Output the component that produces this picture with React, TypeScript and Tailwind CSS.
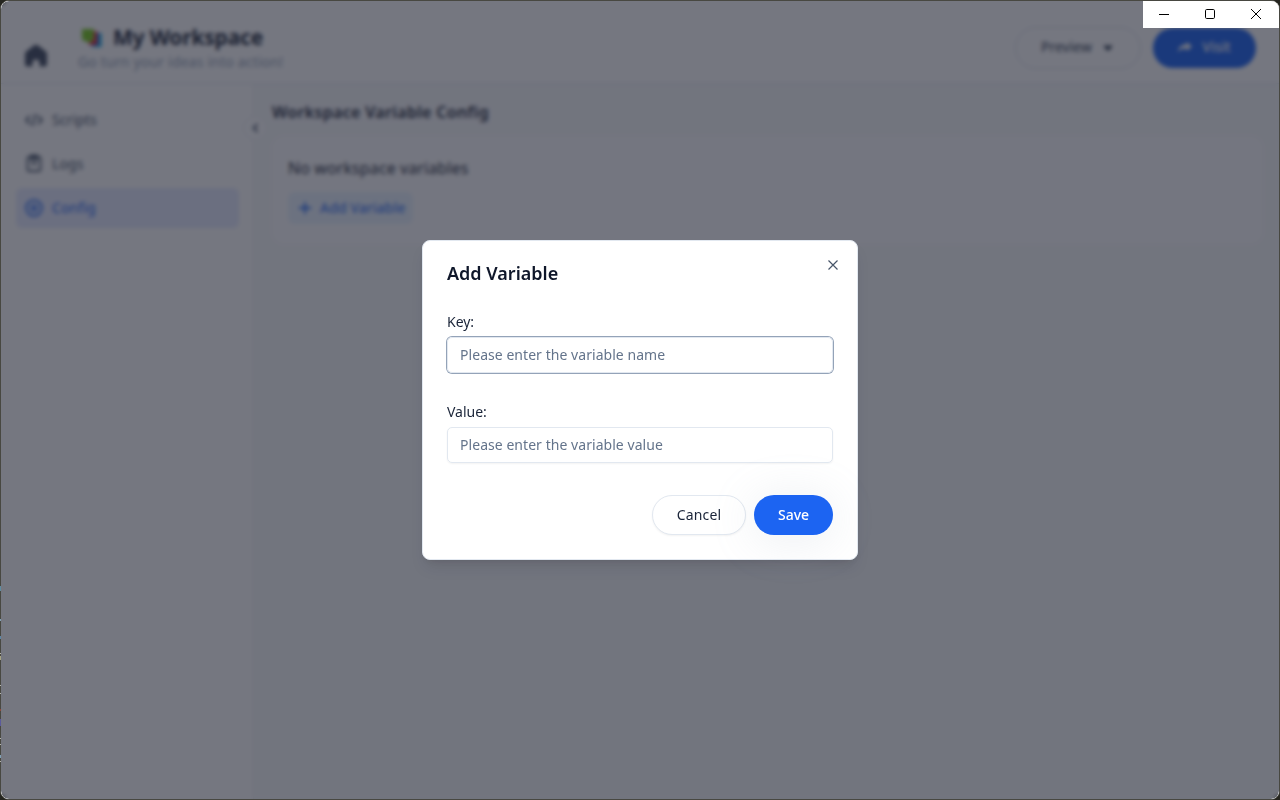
const edgeMarks = [
  { top: 586, height: 5, color: "#5f8ca0" },
  { top: 619, height: 2, color: "#83a2b5" },
  { top: 636, height: 3, color: "#5c86a4" },
  { top: 653, height: 1, color: "#b5b5ac" },
  { top: 656, height: 4, color: "#a7a583" },
  { top: 685, height: 1, color: "#b5b5ac" },
  { top: 693, height: 1, color: "#b5b5ac" },
  { top: 709, height: 2, color: "#8c4a3c" },
  { top: 719, height: 7, color: "#5b5a9c" },
  { top: 738, height: 1, color: "#b5b5ac" },
  { top: 744, height: 1, color: "#b5b5ac" },
  { top: 755, height: 3, color: "#7fa0b5" },
  { top: 761, height: 1, color: "#b5b5ac" },
];

function WindowControls() {
  return (
    <div className="flex h-[27px] w-[136px] items-center bg-white text-black">
      <div className="flex h-full w-[42px] items-start justify-center pt-2">
        <svg width="10" height="10" viewBox="0 0 10 10" shapeRendering="crispEdges"><path d="M0 5.5h10" stroke="currentColor" /></svg>
      </div>
      <div className="flex h-full w-[50px] items-start justify-center pt-2">
        <svg width="10" height="10" viewBox="0 0 10 10" fill="none"><rect x=".5" y=".5" width="9" height="9" rx="1.2" stroke="currentColor" /></svg>
      </div>
      <div className="flex h-full w-[42px] items-start justify-center pt-2">
        <svg width="10" height="10" viewBox="0 0 10 10"><path d="M0 0l10 10M10 0L0 10" stroke="currentColor" /></svg>
      </div>
    </div>
  );
}

function Header() {
  return (
    <header className="flex h-[83px] shrink-0 items-center border-b border-[#e2e8f0] bg-white pr-[23px] pl-[23px]">
      <svg className="mt-[27px] self-start" width="24" height="41" viewBox="0 0 24 41" fill="#3f4a5f">
        <path d="M10.200 17.300 2.200 23.500A3 3 0 0 0 1 26v10a2.500 2.500 0 0 0 2.500 2.500h5V35a3.500 3.500 0 0 1 7 0v3.500h5A2.500 2.500 0 0 0 23 36V26a3 3 0 0 0-1.200-2.500l-8-6.200a3 3 0 0 0-3.600 0z" />
      </svg>
      <div className="ml-[30px] mt-[11px] flex h-[50px] flex-col">
        <div className="flex h-[30px] items-center">
          <svg className="mr-[9px] ml-1" width="22" height="20" viewBox="0 0 22 20">
            <path d="M9 5h10.500v14H10z" fill="#0ea5e9" />
            <path d="M6 3.500h9.500v13.500H7z" fill="#e11d48" />
            <path d="M0 1h12v10c-1 3-3 4-6 3-3-.5-5-1-6-3z" fill="#77c81e" />
          </svg>
          <h1 className="whitespace-nowrap text-[21px] font-bold tracking-[-0.2px] text-[#1e293b]">My Workspace</h1>
        </div>
        <p className="mt-[1px] whitespace-nowrap text-[14px] leading-4 tracking-[0.18px] text-[#94a3b8]">Go turn your ideas into action!</p>
      </div>
      <div className="ml-auto flex items-center gap-3 pt-[11px]">
        <div className="flex h-[42px] w-[126px] items-center justify-center gap-[11px] rounded-full border border-[#d8dfe9] pr-[2px] pb-[2px] text-[14px] text-[#334155]">
          Preview
          <svg className="mt-[2px]" width="10" height="8" viewBox="0 0 10 8" fill="currentColor"><path d="M1 1.500h8a.6.600 0 0 1 .4 1L5.500 6.800a.7.700 0 0 1-1 0L.6 2.500a.6.600 0 0 1 .4-1z" /></svg>
        </div>
        <div className="flex h-10 w-[103px] items-center justify-center gap-[10px] rounded-full bg-[#1c64f2] pb-[2px] text-[14px] font-medium text-white">
          <svg width="14" height="12" viewBox="0 0 14 12" fill="currentColor"><path d="M8.500 1 14 5.500 8.500 10V7.500C5 7.200 2 8 0 11c.3-5 4-7.500 8.500-7.500z" /></svg>
          Visit
        </div>
      </div>
    </header>
  );
}

function Sidebar() {
  return (
    <aside className="relative flex w-[253px] shrink-0 flex-col gap-1 border-r border-[#f0f1f4] bg-white py-4 pr-[14px] pl-[15px] text-[14px] tracking-[0.1px] text-[#475569]">
      <div className="flex h-10 items-center gap-[9px] px-[9px] pb-[2px]">
        <svg className="mt-[2px]" width="18" height="16" viewBox="0 0 18 16" fill="none" stroke="currentColor" strokeWidth="1.8"><path d="m5 4-4 4 4 4m8-8 4 4-4 4M10.500 2l-3 12" /></svg>
        Scripts
      </div>
      <div className="flex h-10 items-center gap-[9px] px-[9px] pb-[2px]">
        <svg width="18" height="18" viewBox="0 0 18 18" fill="none" stroke="currentColor" strokeWidth="1.800"><rect x="2.500" y="3" width="13" height="14" rx="1.500" /><path d="M6 1.500h6v4H6zm0 8h6" /></svg>
        Logs
      </div>
      <div className="flex h-10 items-center gap-[9px] rounded-md bg-[#e6ebff] px-[9px] pb-[2px] text-[#1c64f2]">
        <svg className="mt-[2px]" width="18" height="18" viewBox="0 0 18 18" fill="none" stroke="currentColor" strokeWidth="1.800"><circle cx="9" cy="9" r="7.800" /><circle cx="9" cy="9" r="2.600" /></svg>
        Config
      </div>
      <div className="absolute top-8 -right-[14px] z-10 flex size-[24px] items-center justify-center rounded-full border border-[#edf0f4] bg-white text-[#475569]">
        <svg width="7" height="10" viewBox="0 0 7 10" fill="none" stroke="currentColor" strokeWidth="1.800"><path d="M5.500 1 1.500 5l4 4" /></svg>
      </div>
    </aside>
  );
}

function Field({ label, placeholder, focused = false }: { label: string; placeholder: string; focused?: boolean }) {
  return (
    <label className="flex flex-col">
      <span className="h-5 text-[14px] leading-5 tracking-[-0.02px] text-[#1a2438]">{label}</span>
      <input
        placeholder={placeholder}
        className={
          focused
            ? "mt-[5px] h-9 rounded-[5px] border border-[#e2e8f0] px-3 pb-[2px] text-[14px] tracking-[0.05px] shadow-[0_0_0_1px_#94a3b8] outline-none placeholder:text-[#64748b]"
            : "mt-[5px] h-9 rounded-[5px] border border-[#e2e8f0] px-3 pb-[2px] text-[14px] tracking-[0.05px] shadow-[0_1px_2px_rgba(0,0,0,0.05)] outline-none placeholder:text-[#64748b]"
        }
      />
    </label>
  );
}

function VariableDialog() {
  return (
    <section role="dialog" className="relative flex h-[320px] w-[436px] flex-col rounded-[8px] border border-[#e2e8f0] bg-white p-6 shadow-[0_10px_15px_-3px_rgba(0,0,0,0.1),0_4px_6px_-4px_rgba(0,0,0,0.1)]">
      <h2 className="mt-[-2px] h-5 text-[18px] font-semibold leading-5 tracking-[0px] text-[#0f172a]">Add Variable</h2>
      <svg className="absolute top-[19px] right-[19px] text-[#475569]" width="10" height="10" viewBox="0 0 10 10"><path d="m.5.500 9 9m0-9-9 9" stroke="currentColor" strokeWidth="1.200" /></svg>
      <div className="mt-[29px] flex flex-col gap-[29px]">
        <Field label="Key:" placeholder="Please enter the variable name" focused />
        <Field label="Value:" placeholder="Please enter the variable value" />
      </div>
      <div className="mt-8 flex justify-end gap-2 text-[14px]">
        <button className="h-10 w-[94px] rounded-full border border-[#e2e8f0] bg-white pb-[2px] tracking-[0.15px] text-[#1a2438] shadow-[0_1px_2px_rgba(0,0,0,0.05)]">Cancel</button>
        <button className="h-10 w-[79px] rounded-full bg-[#1c64f2] pb-[2px] font-medium text-white shadow-[0_4px_48px_rgba(148,163,184,0.2)]">Save</button>
      </div>
    </section>
  );
}

export default function App() {
  return (
    <div className="relative h-[800px] w-[1280px] overflow-hidden bg-[#25251f] font-['Noto_Sans',sans-serif]">
      <div className="relative flex h-full flex-col overflow-hidden rounded-[9px] border border-[#484841] bg-white">
        <Header />
        <div className="flex min-h-0 flex-1">
          <Sidebar />
          <main className="flex-1 bg-[#f8f9fb] pt-4 pr-4 pl-[18px]">
            <h2 className="h-6 text-[16px] font-semibold leading-6 tracking-[0.33px] text-[#1e293b]">Workspace Variable Config</h2>
            <div className="mt-3 h-[108px] rounded-xl bg-[#fdfdfe] p-4">
              <p className="h-6 pt-1 text-[16px] leading-6 tracking-[0.1px] text-[#1e293b]">No workspace variables</p>
              <div className="mt-4 flex h-8 w-[125px] items-center gap-[9px] rounded-md bg-[#e9f3ff] pb-px pl-[11px] text-[14px] tracking-[0.2px] text-[#1c64f2]">
                <svg width="12" height="12" viewBox="0 0 12 12" stroke="currentColor" strokeWidth="1.800"><path d="M0 6h12M6 0v12" /></svg>
                <span className="whitespace-nowrap">Add Variable</span>
              </div>
            </div>
          </main>
        </div>
        <div className="absolute inset-0 z-20 flex items-center justify-center bg-[rgba(25,29,44,0.6)] backdrop-blur-[2px]">
          <VariableDialog />
        </div>
        <div className="absolute top-0 right-0 z-30 w-[136px]"><WindowControls /></div>
      </div>
      {edgeMarks.map((m) => (
        <i key={m.top} className="absolute left-0 w-px" style={{ top: m.top, height: m.height, background: m.color }} />
      ))}
    </div>
  );
}
